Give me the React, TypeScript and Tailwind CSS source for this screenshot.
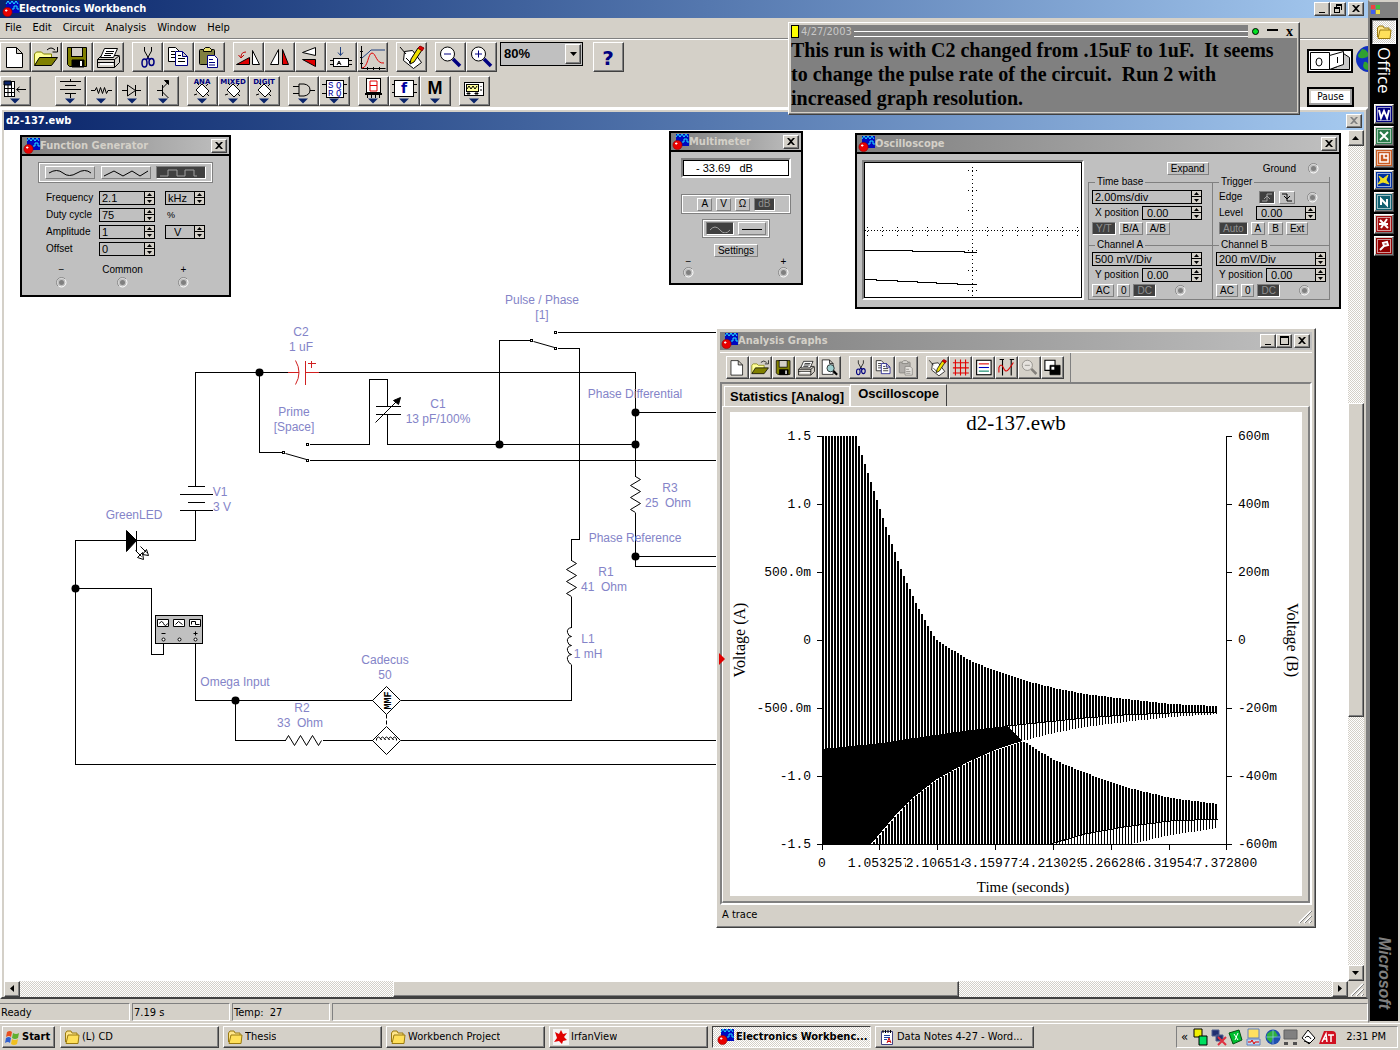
import { useId } from 'react';
import type { ReactNode } from 'react';

const raised =
  'border border-white border-r-[#404040] border-b-[#404040] shadow-[inset_-1px_-1px_0_#808080] bg-[#d4d0c8]';
const sunken = 'border border-[#808080] border-r-white border-b-white';
const dither = 'bg-[repeating-conic-gradient(#ffffff_0_25%,#d4d0c8_0_50%)] bg-[length:2px_2px]';
const ui = "font-['DejaVu_Sans_Condensed','Liberation_Sans',sans-serif] text-[11px] leading-[14px]";
const panelFont = "font-['Liberation_Sans',sans-serif] text-[10px] leading-[12px]";

/* ---------- small drawings ---------- */

function AppIcon() {
  return (
    <svg className="size-[18px] shrink-0" viewBox="0 0 18 18">
      <rect x="5" y="1" width="13" height="12" fill="#0008c0" />
      <path d="M5 4l2-3 2 3 2-3 2 3 2-3 2 3M11 9h2V6h3v3h2" fill="none" stroke="#20e0ff" />
      <circle cx="6.500" cy="12" r="4.600" fill="#e80000" stroke="#900000" strokeWidth=".6" />
      <path d="M4 10.500h2.500M5.200 9.300v2.500" stroke="#fff" strokeWidth=".9" />
    </svg>
  );
}

function FolderIcon() {
  return (
    <svg className="size-4 shrink-0" viewBox="0 0 16 16">
      <path d="M1.500 13V4l1.500-2h4l1 2h5v2" fill="#ffe68a" stroke="#9a7a10" />
      <path d="M2 14.500L4 6h11l-1 8.500z" fill="#ffe05a" stroke="#9a7a10" />
    </svg>
  );
}

function Icon({ children }: { children: ReactNode }) {
  return (
    <svg className="block size-full" viewBox="1 1 29 28" fill="none" stroke="#000">
      {children}
    </svg>
  );
}

const Tip = () => <path d="M10 22.500h10l-5 5z" fill="#0a246a" stroke="none" />;
const Chip = () => (
  <>
    <path d="M9 14l6-6 7 7-6 6z" fill="#fff" />
    <path d="M12 9l-2-2M10 18l-3 1M19 10l2-2M20 18l2 2" />
  </>
);

const icons: Record<string, ReactNode> = {
  new: <path d="M6.500 5.500h10l6 6v14h-16zM16.500 5.500v6h6" fill="#fff" />,
  open: (
    <>
      <path d="M3.500 23V12l2-2h5l2 2h8v4" fill="#ffff99" stroke="#808000" />
      <path d="M3.500 23.500l5-8h18l-6 8z" fill="#808000" />
      <path d="M16 8q4-4 8 0M26.500 5v5h-5" />
    </>
  ),
  save: (
    <>
      <path d="M5.500 5.500h19v19h-17l-2-2z" fill="#808000" />
      <rect x="9.500" y="5.500" width="11" height="9" fill="#d4d0c8" />
      <path d="M10 18h12v7H10z" fill="#000" />
      <path d="M18 19h2v5h-2z" fill="#fff" stroke="none" />
    </>
  ),
  print: (
    <>
      <path d="M4.500 17.500l4-4h17l1 1v6l-5 5h-17z" fill="#d4d0c8" />
      <path d="M11.500 6.500h13l-4 9h-13z" fill="#fff" />
      <path d="M13 9.500h8M12 11.500h8M11 13.500h7M4.500 17.500h17l5-4M4.500 20.500h17M21.500 17.500v8" />
      <path d="M7 21h13v2H7z" fill="#fff" stroke="none" />
    </>
  ),
  preview: (
    <>
      <path d="M5.500 4.500h10l5 5v15h-15zM15.500 4.500v5h5" fill="#fff" />
      <circle cx="17" cy="16" r="5" fill="#9fd0d0" />
      <path d="M21 20l5 5" strokeWidth="3" />
    </>
  ),
  cut: (
    <>
      <path d="M12.500 5v4l4.500 8M19.500 5v4l-4.500 8" />
      <g stroke="#000080" strokeWidth="1.500">
        <ellipse cx="12.500" cy="21" rx="2.500" ry="4" />
        <ellipse cx="19.500" cy="20" rx="2.500" ry="3.500" />
        <path d="M14 18l2-2 2 2" />
      </g>
    </>
  ),
  copy: (
    <>
      <path d="M5.500 5.500h7l4 4v10h-11z" fill="#fff" />
      <path d="M8 9.500h4M8 12.500h5M8 15.500h5" />
      <path d="M12.500 9.500h7l5 5v9h-12zM19.500 9.500v5h5" fill="#fff" stroke="#000080" />
      <path d="M15 13.500h3M15 16.500h7M15 19.500h7" />
    </>
  ),
  paste: (
    <>
      <rect x="5.500" y="7.500" width="15" height="15" rx="1" fill="#808040" />
      <path d="M9.500 9.500v-2l2-2h4l2 2v2z" fill="#e8e070" />
      <path d="M13.500 13.500h7l3 3v9h-10z" fill="#fff" stroke="#000080" />
      <path d="M15 17.500h4M15 20.500h6M15 23h6" stroke="#000080" />
    </>
  ),
  rotate: (
    <>
      <path d="M3.500 22.500h13v-7z" fill="#e00000" />
      <path d="M19.500 8.500v14h7z" fill="#fff" />
      <path d="M13 10q-5 0-5 5M5.500 13l2.500 3 3-3" stroke="#c00000" />
    </>
  ),
  flipH: (
    <>
      <path d="M6.500 22.500h8v-15z" fill="#fff" />
      <path d="M18.500 7.500v15h6z" fill="#e00000" />
    </>
  ),
  flipV: (
    <>
      <path d="M20.500 5.500v8l-13-3z" fill="#fff" />
      <path d="M7.500 17.500h13v7z" fill="#e00000" />
    </>
  ),
  part: (
    <>
      <path d="M14.500 5v8M12 10.500l2.500 3 2.500-3" stroke="#204080" />
      <rect x="7.500" y="16.500" width="15" height="8" fill="#fff" />
      <path d="M4 18.500h3M4 22.500h3M23 18.500h3M23 22.500h3" />
      <path d="M11 23l2-4 2 4M12 21.500h2" />
    </>
  ),
  graph: (
    <>
      <path d="M4.500 4v22.500h24M3 9.500h3M3 15.500h3M3 21.500h3M10.500 25v3M16.500 25v3M22.500 25v3" />
      <path d="M5 16l7-6 2-2h14" stroke="#204080" />
      <path d="M5 26c6 0 6-15 10-15s4 11 12 10" stroke="#e00000" />
    </>
  ),
  notes: (
    <>
      <path d="M8.500 9.500l8-1 9 12-8 6-10-8z" fill="#fff" />
      <path d="M4 5l6 7M10 16l4 4M13 21l5-4" />
      <path d="M22 6l4 2-8 12-4 2 1-5z" fill="#f0e000" />
      <path d="M22 6l2-2 4 2-2 3z" fill="#e00000" stroke="#900000" />
    </>
  ),
  zoomOut: (
    <>
      <path d="M18 17l7 7" stroke="#000080" strokeWidth="3.500" />
      <circle cx="12.500" cy="12" r="7" fill="#fff" />
      <path d="M9 12h7" stroke="#000080" />
    </>
  ),
  zoomIn: (
    <>
      <path d="M18 17l7 7" stroke="#000080" strokeWidth="3.500" />
      <circle cx="12.500" cy="12" r="7" fill="#fff" />
      <path d="M9 12h7M12.500 8.500v7" stroke="#000080" />
    </>
  ),
  help: (
    <text x="15" y="23" fill="#000080" stroke="none" textAnchor="middle" className="font-['DejaVu_Sans',sans-serif] text-[20px] font-bold">
      ?
    </text>
  ),
  grid: (
    <>
      <rect x="4.500" y="5.500" width="10" height="15" fill="#fff" />
      <path d="M4 5h7v4H4z" fill="#0a246a" />
      <path d="M5 12.500h9M5 16.500h9M8 9v11M11.500 5v15M17 13.500h9M19.500 11l-3 2.500 3 2.500" />
    </>
  ),
  battery: <path d="M15.500 3v3M5 5.500h21M10 9.500h11M5 13.500h21M10 17.500h11M15.500 18v4" />,
  resistor: <path d="M5 14.500h4l1.500-3 2 6 2-6 2 6 2-6 2 6 1.500-3h4" />,
  diode: <path d="M5 14.500h5.500M10.500 9v11l8-5.500zM18.500 9v11M18.500 14.500H24" />,
  transistor: (
    <>
      <path d="M9 14.500h5M14.500 9v11M14.500 12l6-6M14.500 16l6 6" />
      <path d="M20.500 4.500v4l-4-4z" fill="#000" />
    </>
  ),
  gate: <path d="M5 10.500h6M5 17.500h6M11 8h5q6 1 6 6t-6 6h-5zM22 14.500h5" />,
  flipflop: (
    <>
      <rect x="7.500" y="4.500" width="17" height="17" fill="#fff" />
      <path d="M3 8.500h4M3 17.500h4M25 8.500h3M25 17.500h3" />
      <g className="font-['Liberation_Mono',monospace] text-[9px]" fill="#0000a0" stroke="none">
        <text x="9" y="12">S</text>
        <text x="17" y="12">Q</text>
        <text x="9" y="20">R</text>
        <text x="17" y="20">Q</text>
      </g>
    </>
  ),
  segment: (
    <>
      <rect x="8.500" y="2.500" width="14" height="14" fill="#fff" />
      <path d="M12 5h7v10h-7zM12 9.500h7" stroke="#e00000" />
      <path d="M7 18h17" strokeWidth="2" />
      <path d="M9.500 18v4M13.500 18v4M17.500 18v4M21.500 18v4" />
    </>
  ),
  func: (
    <>
      <rect x="5.500" y="4.500" width="19" height="16" fill="#fff" />
      <path d="M3 8.500h3M3 16.500h3M25 8.500h3M25 16.500h3" />
      <text x="15" y="17" textAnchor="middle" fill="#0000a0" stroke="none" className="font-['DejaVu_Sans',sans-serif] text-[14px] font-bold">
        f
      </text>
    </>
  ),
  misc: (
    <text x="15" y="18" textAnchor="middle" fill="#000" stroke="none" className="font-['Liberation_Sans',sans-serif] text-[18px] font-bold">
      M
    </text>
  ),
  scope: (
    <>
      <rect x="5.500" y="6.500" width="19" height="13" fill="#fff" />
      <rect x="7.500" y="8.500" width="12" height="7" fill="#ffff99" />
      <path d="M8 13l2-3 2 3 2-3 2 3 2-3M22 10v1M22 13v2" />
      <path d="M8 17h3v1H8zM16 17h3v1h-3z" fill="#000" />
    </>
  ),
  redGrid: <path d="M5 8.500h22M5 15.500h22M5 22.500h22M8.500 4v22M15.500 4v22M22.500 4v22" stroke="#e00000" strokeWidth="1.500" />,
  legend: (
    <>
      <rect x="6" y="5" width="20" height="20" fill="#fff" strokeWidth="1.500" />
      <path d="M9 10h14" stroke="#e00000" strokeWidth="1.500" />
      <path d="M9 15h14" stroke="#0000c0" strokeWidth="1.500" />
      <path d="M9 20h14" stroke="#008060" strokeWidth="1.500" />
    </>
  ),
  cursors: (
    <>
      <path d="M10 4v22M22 4v22M6 4h6M20 4h6" strokeWidth="1.500" />
      <path d="M5 22v-7q3-7 6 0t6 4 8-11" stroke="#e00000" strokeWidth="1.500" />
    </>
  ),
  restore: (
    <>
      <path d="M5 5h14v14H5z" fill="#fff" strokeWidth="1.500" />
      <path d="M12 12h14v13H12z" fill="#000" />
      <path d="M14 14h4v4h-4z" fill="#fff" stroke="none" />
    </>
  ),
};

function Wave({ d, light, wide }: { d: string; light?: boolean; wide?: boolean }) {
  return (
    <svg className={wide ? 'block h-[10px] w-12' : 'block h-2 w-6'} fill="none" stroke={light ? '#a0a0a0' : '#000'}>
      <path d={d} />
    </svg>
  );
}

function Terminal() {
  return (
    <svg className="size-[11px] shrink-0" viewBox="0 0 11 11">
      <circle cx="5.500" cy="5.500" r="4.500" fill="none" stroke="#fff" />
      <path d="M2 9A4.500 4.500 0 0 1 9 2" fill="none" stroke="#808080" />
      <circle cx="5.500" cy="5.500" r="2.500" fill="#808080" />
    </svg>
  );
}

/* ---------- shared controls ---------- */

function ToolButton({ icon, label, tip }: { icon: string; label: string; tip?: boolean }) {
  return (
    <button aria-label={label} className={`h-[30px] w-[31px] shrink-0 ${raised}`}>
      <Icon>
        {icons[icon]}
        {tip && <Tip />}
      </Icon>
    </button>
  );
}

function ChipButton({ label }: { label: string }) {
  return (
    <button className={`h-[30px] w-[31px] shrink-0 ${raised}`}>
      <Icon>
        <text x="15" y="8" textAnchor="middle" fill="#000080" stroke="none" className="font-['DejaVu_Sans',sans-serif] text-[7px] font-bold">
          {label}
        </text>
        <Chip />
        <Tip />
      </Icon>
    </button>
  );
}

function CaptionButton({ kind, disabled }: { kind: 'min' | 'max' | 'restore' | 'close'; disabled?: boolean }) {
  const paths = {
    min: 'M3 9h6v1H3z',
    max: 'M2 1h9v9H2zM3 3v6h7V3z',
    restore: 'M4 1h6v6H9V3H5v1H4zM2 4h6v6H2zM3 6v3h4V6z',
    close: 'M2 2h2l2 2 2-2h2L7 5.500 10 9H8L6 7 4 9H2l3-3.500z',
  };
  return (
    <button aria-label={kind} disabled={disabled} className={`h-[14px] w-4 shrink-0 ${raised}`}>
      <svg className="mx-auto block h-3 w-3" fillRule="evenodd" fill={disabled ? '#808080' : '#000'}>
        <path d={paths[kind]} />
      </svg>
    </button>
  );
}

function Spin({ label, value, className, pad = 'pl-[2px]' }: { label?: ReactNode; value: string; className: string; pad?: string }) {
  const id = useId();
  return (
    <>
      {label && <label htmlFor={id}>{label}</label>}
      <span className={`flex h-[14px] border border-black ${className}`}>
        <input
          id={id}
          aria-label={label ? undefined : 'Scale'}
          defaultValue={value}
          className={`w-0 min-w-0 flex-1 bg-transparent text-[11px] leading-[12px] outline-none ${pad}`}
        />
        <span className="flex w-[10px] flex-col border-l border-black">
          <button aria-label="Up" className="h-[6px] border-b border-black bg-[#d4d0c8]">
            <svg className="mx-auto block h-[5px] w-[7px]">
              <path d="M1 4h5L3.500 1z" />
            </svg>
          </button>
          <button aria-label="Down" className="h-[6px] bg-[#d4d0c8]">
            <svg className="mx-auto block h-[5px] w-[7px]">
              <path d="M1 1h5L3.500 4z" />
            </svg>
          </button>
        </span>
      </span>
    </>
  );
}

function Key({ children, on, className = 'px-[3px]' }: { children: ReactNode; on?: boolean; className?: string }) {
  return (
    <button
      className={`flex h-[13px] items-center justify-center border ${
        on ? 'border-white border-t-[#808080] border-l-[#808080] bg-[#404040] text-[#909090]' : 'border-white border-r-[#808080] border-b-[#808080]'
      } ${className}`}
    >
      {children}
    </button>
  );
}

function Instrument({ title, className, children }: { title: string; className: string; children: ReactNode }) {
  return (
    <section className={`absolute border-2 border-black bg-[#c0c0c0] ${panelFont} ${className}`}>
      <header className={`flex h-[19px] items-center border-b-2 border-black bg-linear-to-r from-[#808080] to-[#c0c0c0] pr-[2px] ${ui}`}>
        <AppIcon />
        <h2 className="flex-1 font-bold text-[#d4d0c8]">{title}</h2>
        <CaptionButton kind="close" />
      </header>
      {children}
    </section>
  );
}

/* ---------- instruments ---------- */

function FunctionGenerator() {
  return (
    <Instrument title="Function Generator" className="top-[5px] left-4 h-[162px] w-[211px]">
      <div className="mx-4 mt-[6px] flex h-[21px] items-center justify-between border border-[#808080] px-[6px] shadow-[inset_0_0_0_1px_#fff]">
        <Key className="w-[50px]"><Wave wide d="M3 5q8-5 14 0t14 0 14 0" /></Key>
        <Key className="w-[50px]"><Wave wide d="M2 8l10-5 9 5 9-5 8 5 8-5" /></Key>
        <Key on className="w-[50px]"><Wave wide light d="M3 8h8V2h9v6h8V2h9v6h3" /></Key>
      </div>
      <div className="mt-2 ml-6 grid grid-cols-[53px_56px_39px] items-center gap-x-0 gap-y-[3px]">
        <Spin label="Frequency" value="2.1" className="w-14" />
        <div className="ml-[10px] w-10"><Spin value="kHz" className="w-10" /></div>
        <Spin label="Duty cycle" value="75" className="w-14" />
        <span className="ml-3 text-[9px]">%</span>
        <Spin label="Amplitude" value="1" className="w-14" />
        <div className="ml-[10px] w-10"><Spin value="V" className="w-10" pad="pl-2" /></div>
        <Spin label="Offset" value="0" className="w-14" />
      </div>
      <div className="mt-2 mr-10 ml-[34px] flex justify-between">
        {['−', 'Common', '+'].map((t) => (
          <div key={t} className="flex min-w-9 flex-col items-center gap-[1px] first:w-[11px] first:min-w-0 last:w-[11px] last:min-w-0">
            <span>{t}</span>
            <Terminal />
          </div>
        ))}
      </div>
    </Instrument>
  );
}

function Multimeter() {
  return (
    <Instrument title="Multimeter" className="top-[1px] left-[665px] h-[154px] w-[134px]">
      <div className="flex flex-col items-center px-[10px] pt-[6px]">
        <output className="h-5 w-full border-2 border-[#808080] border-r-white border-b-white">
          <span className="block h-4 border border-black bg-white pl-3 text-[11px] leading-[14px] whitespace-pre">- 33.69   dB</span>
        </output>
        <div className="mt-4 flex h-5 w-full items-center justify-center gap-1 border border-[#808080] shadow-[inset_0_0_0_1px_#fff]">
          <Key>A</Key>
          <Key>V</Key>
          <Key>Ω</Key>
          <Key on>dB</Key>
        </div>
        <div className="mt-[5px] flex h-[19px] w-[68px] items-center justify-center gap-1 border border-[#808080] shadow-[inset_0_0_0_1px_#fff]">
          <Key on className="w-7"><Wave light d="M2 5q5-6 10 0t10 0" /></Key>
          <Key className="w-7"><Wave d="M2 4.500h20" /></Key>
        </div>
        <Key className="mt-[6px] px-[3px]">Settings</Key>
      </div>
      <div className="mx-3 flex justify-between">
        {['−', '+'].map((t) => (
          <div key={t} className="flex flex-col items-center leading-[10px]">
            <span>{t}</span>
            <Terminal />
          </div>
        ))}
      </div>
    </Instrument>
  );
}

function ScopeScreen() {
  return (
    <svg className="block h-full w-full" shapeRendering="crispEdges" fill="none" stroke="#000">
      <path d="M0 67.500H217" strokeDasharray="1 2" />
      <path d="M107.500 4V134" strokeDasharray="1 3" />
      <path d="M2.500 64V74M17.500 64V74M32.500 64V74M47.500 64V74M62.500 64V74M77.500 64V74M92.500 64V74M122.500 64V74M137.500 64V74M152.500 64V74M167.500 64V74M182.500 64V74M197.500 64V74M212.500 64V74" strokeDasharray="1 3" />
      <path d="M103 7.500h10M103 27.500h10M103 47.500h10M103 87.500h10M103 107.500h10M103 127.500h10" strokeDasharray="1 3" />
      <path d="M0 87.500H47V88.500H99V89.500H112M0 116.500H11V117.500H32V118.500H52V119.500H71V120.500H92V121.500H112" />
    </svg>
  );
}

function Group({ title, className = '', children }: { title: string; className?: string; children: ReactNode }) {
  return (
    <fieldset className={`min-w-0 border-t border-l border-[#808080] pl-[3px] ${className}`}>
      <legend className="ml-[3px] px-[2px] leading-[10px]">{title}</legend>
      {children}
    </fieldset>
  );
}

function Channel({ title, scale }: { title: string; scale: string }) {
  return (
    <Group title={title} className="-mt-[5px]">
      <div className="flex flex-col gap-[2px] pt-[2px]">
        <Spin value={scale} className="w-[110px]" />
        <div className="flex w-[110px] items-center justify-between pl-[3px]">
          <Spin label="Y position" value="0.00" className="w-[60px]" pad="pl-1" />
        </div>
        <div className="flex items-center gap-[3px]">
          <Key>AC</Key>
          <Key>0</Key>
          <Key on>DC</Key>
          <span className="ml-4 flex"><Terminal /></span>
        </div>
      </div>
    </Group>
  );
}

function Oscilloscope() {
  return (
    <Instrument title="Oscilloscope" className="top-[3px] left-[851px] h-[176px] w-[486px]">
      <div className="flex h-[153px] gap-1 px-[5px] pt-[6px] pb-[7px]">
        <div className="h-[140px] w-[222px] shrink-0 border-2 border-[#808080] border-r-white border-b-white">
          <div className="h-full border border-black bg-white">
            <ScopeScreen />
          </div>
        </div>
        <div className="flex flex-1 flex-col">
          <div className="flex h-5 items-center justify-end gap-3 pr-[15px]">
            <span className="mr-[42px]"><Key>Expand</Key></span>
            <span>Ground</span>
            <Terminal />
          </div>
          <div className="mr-1 grid grid-cols-[124px_1fr] grid-rows-[68px_54px] border-r border-b border-[#808080]">
            <Group title="Time base">
              <div className="flex flex-col gap-[2px] pt-[3px]">
                <Spin value="2.00ms/div" className="w-[110px]" />
                <div className="flex w-[110px] items-center justify-between pl-[3px]">
                  <Spin label="X position" value="0.00" className="w-[60px]" pad="pl-1" />
                </div>
                <div className="flex gap-[3px]">
                  <Key on>Y/T</Key>
                  <Key>B/A</Key>
                  <Key>A/B</Key>
                </div>
              </div>
            </Group>
            <Group title="Trigger">
              <div className="flex flex-col gap-[2px] pt-[3px] pl-[3px]">
                <div className="flex h-[14px] items-center gap-1">
                  <span className="w-9">Edge</span>
                  <Key on className="w-4"><svg className="h-[9px] w-3" stroke="#a0a0a0" fill="none"><path d="M1 8h5V1h5M3 6l3-3 3 3" /></svg></Key>
                  <Key className="w-4"><svg className="h-[9px] w-3" stroke="#000" fill="none"><path d="M1 1h5v7h5M3 3l3 3 3-3" /></svg></Key>
                  <span className="ml-2 flex"><Terminal /></span>
                </div>
                <div className="flex w-[97px] items-center justify-between">
                  <Spin label="Level" value="0.00" className="w-[60px]" pad="pl-1" />
                </div>
                <div className="flex gap-[3px]">
                  <Key on>Auto</Key>
                  <Key>A</Key>
                  <Key>B</Key>
                  <Key>Ext</Key>
                </div>
              </div>
            </Group>
            <Channel title="Channel A" scale="500 mV/Div" />
            <Channel title="Channel B" scale="200 mV/Div" />
          </div>
        </div>
      </div>
    </Instrument>
  );
}

/* ---------- schematic ---------- */

const wires =
  'M195 486V372H287M318 372H635V476M259 372V452H282M309 444H369V379H387V406M387 414V444H635M309 460H720' +
  'M195 510V540H75V764H720M75 588H151V654H163V643M195 643V700H372M400 700H571V664M235 700V740H285' +
  'M322 740H372M400 740H720M557 332H720M530 340H499V444M557 348H579V539H571V560M571 596V627' +
  'M635 412H720M635 512V566H720M635 556H720M187 486H204M179 494H212M187 502H204M179 510H212M375 406H400M375 414H400M136 530V551';

const dots = [[259, 372], [499, 444], [635, 412], [635, 444], [635, 556], [75, 588], [235, 700]];
const contacts = [[283, 452], [307, 444], [307, 460], [531, 340], [555, 332], [555, 348]];

const partLabels: [number, number, string][] = [
  [301, 337, 'C2'], [301, 352, '1 uF'], [294, 417, 'Prime'], [294, 432, '[Space]'],
  [438, 409, 'C1'], [438, 424, '13 pF/100%'], [220, 497, 'V1'], [222, 512, '3 V'],
  [134, 520, 'GreenLED'], [235, 687, 'Omega Input'], [385, 665, 'Cadecus'], [385, 680, '50'],
  [302, 713, 'R2'], [300, 728, '33  Ohm'], [542, 305, 'Pulse / Phase'], [542, 320, '[1]'],
  [635, 399, 'Phase Differential'], [670, 493, 'R3'], [668, 508, '25  Ohm'], [635, 543, 'Phase Reference'],
  [606, 577, 'R1'], [604, 592, '41  Ohm'], [588, 644, 'L1'], [588, 659, '1 mH'],
];

function Schematic() {
  return (
    <svg className="absolute inset-0 h-full w-full">
      <g transform="translate(-3.5 -129.5)" fill="none" stroke="#000">
        <path d={wires} shapeRendering="crispEdges" />
        {dots.map(([x, y]) => (
          <circle key={`${x}-${y}`} cx={x} cy={y} r="4" fill="#000" stroke="none" />
        ))}
        {contacts.map(([x, y]) => (
          <rect key={`${x}-${y}`} x={x - 1} y={y - 1} width="2" height="2" />
        ))}
        <path d="M285 453l21 6M533 341l21 6" />
        <path d="M285 740l3-5 6 10 6-10 6 10 6-10 6 10 3-5" />
        <path d="M635 476l5 3-10 6 10 6-10 6 10 6-10 6 5 3M571 560l5 3-10 6 10 6-10 6 10 6-10 6 5 3" />
        <path d="M571 627q-5 1-4 5t4 4q-5 1-4 5t4 4q-5 1-4 5t4 4q-5 1-4 5t4 5" />
        <path d="M386 686l14 14-14 14-14-14zM386 726l14 14-14 14-14-14z" />
        <path d="M386 714V726" strokeDasharray="4 2" />
        <path d="M376 740v-2q2-3 4 0t0 0q2-3 4 0t0 0q2-3 4 0t0 0q2-3 4 0t0 0q2-3 4 0v2" />
        <path d="M375 422l22-22" />
        <path d="M400 397l-2 7-5-4z" fill="#000" />
        <path d="M126 530v21l10-11z" fill="#000" />
        <path d="M135 550l6 6M140 546l6 6M143 559l-6-2 5-5zM148 555l-6-1 4-5z" />
        <g stroke="#d02020" shapeRendering="crispEdges">
          <path d="M287 372H298M305 360V384M305 372H318M307 363H315M311 360V367" />
          <path d="M295 360q7 12 0 24" shapeRendering="auto" />
        </g>
        <rect x="155" y="615" width="47" height="28" fill="#c0c0c0" />
        <path d="M157 619h11v7h-11zM173 619h11v7h-11zM189 619h11v7h-11z" fill="#fff" />
        <path d="M159 623q2-4 4 0t4 0M175 624l3-3 4 3M191 624v-3h4v3h4M161 633h4M193 633h4M195 631v4" />
        <circle cx="163" cy="639" r="1.500" fill="#fff" />
        <circle cx="179" cy="639" r="1.500" fill="#fff" />
        <circle cx="195" cy="639" r="1.500" fill="#fff" />
        <text transform="translate(390 700) rotate(-90)" textAnchor="middle" fill="#000" stroke="none" className="font-['Liberation_Mono',monospace] text-[10px] font-bold">
          MMF
        </text>
        <g transform="translate(-0.5 -1.5)" fill="#8484c8" stroke="none" textAnchor="middle" className="font-['Liberation_Sans',sans-serif] text-[12px]">
          {partLabels.map(([x, y, t]) => (
            <text key={t} x={x} y={y} className="whitespace-pre">
              {t}
            </text>
          ))}
        </g>
      </g>
    </svg>
  );
}

/* ---------- analysis graphs ---------- */

type Curve = [number, number][];

const aTop: Curve = [[822, 436], [855, 436], [861, 455], [871, 485], [883, 521], [900, 569], [915, 603], [931, 633], [937, 641], [968, 660], [995, 671], [1026, 681], [1053, 688], [1085, 694], [1124, 699], [1170, 704], [1218, 706]];
const aLow: Curve = [[822, 749], [882, 743], [921, 737], [964, 731], [1007, 726], [1046, 722], [1085, 718], [1124, 715], [1170, 713], [1218, 712]];
const aTail: Curve = [[1007, 746], [1022, 741], [1053, 733], [1085, 727], [1124, 722], [1170, 717], [1218, 714]];
const solidLow: Curve = [[822, 844], [871, 844], [894, 817], [910, 800], [937, 779], [968, 762], [995, 750], [1022, 741]];
const bTop: Curve = [[1009, 728], [1022, 741], [1053, 760], [1085, 773], [1124, 787], [1170, 798], [1218, 804]];
const bLow: Curve = [[822, 844], [1051, 844], [1085, 834], [1124, 827], [1170, 821], [1218, 819]];
const bTail: Curve = [[1051, 844], [1131, 844], [1170, 835], [1218, 828]];

function at(curve: Curve, x: number) {
  for (let i = 1; i < curve.length; i++) {
    const [x0, y0] = curve[i - 1];
    const [x1, y1] = curve[i];
    if (x <= x1) return Math.round(y0 + ((y1 - y0) * (x - x0)) / (x1 - x0));
  }
  return curve[curve.length - 1][1];
}

function bars(top: Curve, low: Curve, from: number, width: number) {
  let d = '';
  for (let x = from; x < 1217; x += 3) {
    const y0 = at(top, x);
    const y1 = at(low, x);
    if (y1 > y0) d += `M${x} ${y0}h${width}V${y1}h-${width}z`;
  }
  return d;
}

const line = (c: Curve) => 'M' + c.map((p) => p.join(' ')).join('L');
const solid = line([...aLow.filter(([x]) => x < 1010), [1009, 728], ...[...solidLow].reverse()]) + 'z';

const leftTicks = ['1.5', '1.0', '500.0m', '0', '-500.0m', '-1.0', '-1.5'];
const rightTicks = ['600m', '400m', '200m', '0', '-200m', '-400m', '-600m'];
const timeTicks: [number, string][] = [
  [822, '0'], [879, '1.053257'], [937, '2.106514'], [995, '3.159771'],
  [1053, '4.213029'], [1111, '5.266286'], [1169, '6.319543'], [1226, '7.372800'],
];

function Plot() {
  return (
    <svg className="block h-full w-full bg-white" viewBox="730 412 572 484" preserveAspectRatio="xMidYMid meet">
      <g shapeRendering="crispEdges">
        <path d={bars(aTop, aLow, 822, 2)} />
        <path d={bars(aLow, aTail, 1009, 1)} />
        <path d={solid} />
        <path d={bars(solidLow, bLow, 873, 2)} clipPath="url(#beforeCross)" />
        <path d={bars(bTop, bLow, 1023, 2)} />
        <path d={bars(bLow, bTail, 1053, 1)} />
        <path d={line(aLow.slice(4)) + line(bLow.slice(1))} fill="none" stroke="#000" />
        <path
          d="M822.500 436V844.500H1226.500V436M817 436.500h5M817 504.500h5M817 572.500h5M817 640.500h5M817 708.500h5M817 776.500h5M817 844.500h5M1226 436.500h6M1226 504.500h6M1226 572.500h6M1226 640.500h6M1226 708.500h6M1226 776.500h6M1226 844.500h6"
          fill="none"
          stroke="#000"
        />
        <path d="M822.500 844v6M879.500 844v6M937.500 844v6M995.500 844v6M1053.500 844v6M1111.500 844v6M1169.500 844v6M1226.500 844v6" stroke="#000" />
      </g>
      <clipPath id="beforeCross">
        <rect x="822" y="412" width="200" height="440" />
      </clipPath>
      <g className="font-['Liberation_Mono',monospace] text-[13px]">
        {leftTicks.map((t, i) => (
          <text key={t} x="811" y={440 + i * 68} textAnchor="end">{t}</text>
        ))}
        {rightTicks.map((t, i) => (
          <text key={t} x="1238" y={440 + i * 68}>{t}</text>
        ))}
        {timeTicks.map(([x, t]) => (
          <g key={t}>
            {t !== '0' && <rect x={x - 31} y="855" width="62" height="14" fill="#fff" />}
            <text x={x} y="867" textAnchor="middle">{t}</text>
          </g>
        ))}
      </g>
      <g textAnchor="middle" className="font-['Liberation_Serif',serif]">
        <text x="1016" y="430" className="text-[21px]">d2-137.ewb</text>
        <text x="1023" y="892" className="text-[15px]">Time (seconds)</text>
        <text transform="translate(745 640) rotate(-90)" className="text-[16px]">Voltage (A)</text>
        <text transform="translate(1287 640) rotate(90)" className="text-[16px]">Voltage (B)</text>
      </g>
    </svg>
  );
}

const graphTools = [
  ['new', 'open', 'save', 'print', 'preview'],
  ['cut', 'copy', 'paste'],
  ['notes', 'redGrid', 'legend', 'cursors', 'zoomOut', 'restore'],
];

function Grip() {
  return (
    <svg className="size-[14px] shrink-0">
      <path d="M13 1L1 13M13 6L6 13M13 11l-2 2" stroke="#fff" strokeWidth="2" />
      <path d="M14 1L2 13M14 6L7 13M14 11l-2 2" stroke="#808080" />
    </svg>
  );
}

function AnalysisGraphs() {
  return (
    <section className={`absolute top-[198px] left-[712px] flex h-[600px] w-[600px] flex-col p-[3px] ${ui} ${raised}`}>
      <header className="flex h-[18px] shrink-0 items-center bg-linear-to-r from-[#808080] to-[#c0c0c0] pr-[2px]">
        <AppIcon />
        <h2 className="flex-1 font-bold text-[#d4d0c8]">Analysis Graphs</h2>
        <CaptionButton kind="min" />
        <CaptionButton kind="max" />
        <span className="w-[2px]" />
        <CaptionButton kind="close" />
      </header>
      <div className="mt-[2px] flex h-[30px] shrink-0 border-t border-white">
        <div className="flex gap-2 border-r border-[#808080] pt-[3px] pr-[6px] pl-[6px]">
          {graphTools.map((set) => (
            <div key={set[0]} className="flex">
              {set.map((name) => {
                const off = name === 'paste' || name === 'zoomOut';
                return (
                  <button key={name} aria-label={name} disabled={off} className={`h-[23px] w-[23px] ${raised}`}>
                    <span className={off ? 'block size-full opacity-40 grayscale' : 'block size-full'}>
                      <Icon>{icons[name]}</Icon>
                    </span>
                  </button>
                );
              })}
            </div>
          ))}
        </div>
      </div>
      <div className="flex min-h-0 flex-1 flex-col border-2 border-[#808080] border-r-white border-b-white">
        <div role="tablist" className="flex h-[22px] shrink-0 items-end pl-[2px] font-['Liberation_Sans',sans-serif] text-[13px] font-bold">
          <button role="tab" aria-selected="false" className="h-5 border border-b-0 border-white px-[5px]">Statistics [Analog]</button>
          <button role="tab" aria-selected="true" className="h-[22px] border border-b-0 border-white border-r-[#404040] px-[7px] pb-1">Oscilloscope</button>
        </div>
        <div className="relative min-h-0 flex-1 border border-white border-r-2 border-b-2 border-r-[#808080] border-b-[#808080] py-[5px] pr-[6px] pl-[7px]">
          <Plot />
          <svg className="absolute top-[246px] -left-1 h-3 w-[6px]">
            <path d="M0 0l6 6-6 6z" fill="#e00000" />
          </svg>
        </div>
      </div>
      <footer className="flex h-[19px] shrink-0 items-end justify-between pl-[2px]">
        <span className="self-center">A trace</span>
        <Grip />
      </footer>
    </section>
  );
}

/* ---------- frame ---------- */

function StickyNote() {
  return (
    <section className={`absolute top-[22px] left-[788px] z-10 flex h-[93px] w-[512px] flex-col p-[2px] ${raised}`}>
      <header className={`flex h-[13px] shrink-0 items-center ${ui}`}>
        <span className="h-[13px] w-2 border border-black bg-[#ffff00]" />
        <div className="flex h-full flex-1 items-center bg-[#808080] text-[#c8c8c8]">
          <span className="px-[2px]">4/27/2003</span>
          <span className="mt-1 h-[6px] flex-1 border-y border-white" />
        </div>
        <div className="flex w-[49px] items-center justify-around">
          <span className="size-[7px] rounded-full border border-black bg-[#00e020]" />
          <span className="mb-1 h-[2px] w-[11px] bg-black" />
          <button aria-label="Close note" className="font-['Liberation_Serif',serif] text-[14px] leading-[12px] font-bold">x</button>
        </div>
      </header>
      <textarea
        aria-label="Note"
        defaultValue="This run is with C2 changed from .15uF to 1uF.  It seems to change the pulse rate of the circuit.  Run 2 with increased graph resolution."
        className="block w-full flex-1 resize-none overflow-hidden bg-[#808080] pr-4 font-['Liberation_Serif',serif] text-[20px] leading-6 font-bold outline-none"
      />
    </section>
  );
}

function Toolbars() {
  return (
    <div className="flex h-[69px] shrink-0 border-t border-b border-t-white border-b-white pt-[2px]">
      <div className="flex flex-1 flex-col gap-1">
        <div className="flex gap-2">
          <div className="flex">
            <ToolButton icon="new" label="New" />
            <ToolButton icon="open" label="Open" />
            <ToolButton icon="save" label="Save" />
            <ToolButton icon="print" label="Print" />
          </div>
          <div className="flex">
            <ToolButton icon="cut" label="Cut" />
            <ToolButton icon="copy" label="Copy" />
            <ToolButton icon="paste" label="Paste" />
          </div>
          <div className="flex">
            <ToolButton icon="rotate" label="Rotate" />
            <ToolButton icon="flipH" label="Flip horizontal" />
            <ToolButton icon="flipV" label="Flip vertical" />
            <ToolButton icon="part" label="Create subcircuit" />
            <ToolButton icon="graph" label="Display graphs" />
          </div>
          <ToolButton icon="notes" label="Component properties" />
          <div className="flex">
            <ToolButton icon="zoomOut" label="Zoom out" />
            <ToolButton icon="zoomIn" label="Zoom in" />
            <div className="relative mr-[2px] ml-[3px] h-6 w-[83px]">
              <select
                aria-label="Zoom"
                className="h-full w-full appearance-none border border-black bg-[#c0c0c0] pl-[3px] font-['Liberation_Sans',sans-serif] text-[13px] leading-4 font-bold"
              >
                <option>80%</option>
              </select>
              <span className={`pointer-events-none absolute top-[2px] right-[2px] flex h-5 w-4 items-center justify-center ${raised}`}>
                <svg className="h-1 w-[7px]">
                  <path d="M0 0h7L3.500 4z" />
                </svg>
              </span>
            </div>
          </div>
          <ToolButton icon="help" label="Help" />
        </div>
        <div className="flex gap-2">
          <span className="mr-4 flex"><ToolButton icon="grid" label="Favorites" tip /></span>
          <div className="flex">
            <ToolButton icon="battery" label="Sources" tip />
            <ToolButton icon="resistor" label="Basic" tip />
            <ToolButton icon="diode" label="Diodes" tip />
            <ToolButton icon="transistor" label="Transistors" tip />
          </div>
          <div className="flex">
            <ChipButton label="ANA" />
            <ChipButton label="MIXED" />
            <ChipButton label="DIGIT" />
          </div>
          <div className="flex">
            <ToolButton icon="gate" label="Logic gates" tip />
            <ToolButton icon="flipflop" label="Digital" tip />
          </div>
          <div className="flex">
            <ToolButton icon="segment" label="Indicators" tip />
            <ToolButton icon="func" label="Controls" tip />
            <ToolButton icon="misc" label="Miscellaneous" tip />
          </div>
          <ToolButton icon="scope" label="Instruments" tip />
        </div>
      </div>
      <div className="flex w-[61px] flex-col gap-[10px] pt-[7px]">
        <div className="flex justify-between">
          <button aria-label="Power" className="h-6 w-[46px] border-2 border-black bg-white">
            <svg className="block h-5 w-[42px]" fill="none" stroke="#000">
              <path d="M1.500 1.500h19v17h-19z" />
              <ellipse cx="10" cy="11" rx="3" ry="4" />
              <path d="M20.500 18.500l8-3 6-13 6 4v12z" fill="#c8c8c8" />
              <path d="M20.500 18.500v-14l14-4v13l-6 2zM28.500 6v6" fill="#fff" />
            </svg>
          </button>
          <svg className="h-7 w-3 -translate-y-1" viewBox="0 0 12 28">
            <circle cx="13" cy="14" r="13" fill="#1030c0" />
            <path d="M6 4q4 0 6 4t-4 5-6-3zM8 17q3-1 4 2v6q-4 0-5-4z" fill="#30a030" />
          </svg>
        </div>
        <button className={`h-6 w-[47px] border-2 border-black bg-white text-[10px] shadow-[inset_-2px_-2px_0_#a0a0a0,inset_2px_2px_0_#d4d0c8]`}>Pause</button>
      </div>
    </div>
  );
}

function Arrow({ d, label }: { d: string; label: string }) {
  return (
    <button aria-label={label} className={`size-4 shrink-0 ${raised}`}>
      <svg className="block size-[14px]">
        <path d={d} />
      </svg>
    </button>
  );
}

function Workspace() {
  return (
    <div className="flex min-h-0 flex-1 flex-col border-2 border-t-white border-l-white border-r-[#808080] border-b-[#404040] p-[2px] pb-0">
      <header className="flex h-[18px] shrink-0 items-center bg-linear-to-r from-[#0a246a] to-[#a6caf0] pr-[2px] pl-[2px]">
        <h2 className="flex-1 font-bold text-white">d2-137.ewb</h2>
        <CaptionButton kind="close" disabled />
      </header>
      <div className="flex min-h-0 flex-1">
        <div className="relative flex-1 overflow-hidden bg-white">
          <Schematic />
          <FunctionGenerator />
          <Multimeter />
          <Oscilloscope />
          <AnalysisGraphs />
        </div>
        <div className={`flex w-4 flex-col ${dither}`}>
          <Arrow label="Scroll up" d="M3 9h7L6.500 5z" />
          <span className="grow-[257] basis-0" />
          <span className={`grow-[313] basis-0 ${raised}`} />
          <span className="grow-[248] basis-0" />
          <Arrow label="Scroll down" d="M3 5h7L6.500 9z" />
        </div>
      </div>
      <div className="flex h-4 shrink-0">
        <div className={`flex flex-1 ${dither}`}>
          <Arrow label="Scroll left" d="M9 3v7L5 6.500z" />
          <span className="grow-[374] basis-0" />
          <span className={`grow-[565] basis-0 ${raised}`} />
          <span className="grow-[374] basis-0" />
          <Arrow label="Scroll right" d="M5 3v7l4-3.500z" />
        </div>
        <div className="flex w-4 justify-end pt-[2px]">
          <Grip />
        </div>
      </div>
    </div>
  );
}

const officeApps: [string, string, ReactNode][] = [
  ['Word', '#000080', <path d="M4 5l2 8 3-7 3 7 2-8" strokeWidth="2" />],
  ['Excel', '#2a7a4a', <path d="M5 5l8 8M13 5l-8 8" strokeWidth="2" />],
  ['PowerPoint', '#c85a20', <path d="M5 5h8v8H5zM9 5v4h4" strokeWidth="1.500" />],
  ['Messenger', '#0030a0', <path d="M4 5l4 3 5-4-2 5 3 4-6-2-5 2 3-4z" stroke="#f0e020" fill="#f0e020" />],
  ['Netscape', '#106070', <path d="M6 12V6l6 6V6" strokeWidth="2" />],
  ['IrfanView', '#a01010', <path d="M5 5l8 8M12 4l-6 9M4 9h9" strokeWidth="2" />],
  ['Access', '#900000', <path d="M5 13l4-4M9 9l-1-3 4-1 1 3z" strokeWidth="2" />],
];

function OfficeBar() {
  return (
    <aside className="flex w-8 flex-col items-center border-2 border-[#d4d0c8] border-l-[#808080] bg-black">
      <div className="flex h-4 w-full shrink-0 bg-[#808080]">
        <svg className="size-[14px]">
          <path d="M1 3h4v4H1z" fill="#f04040" />
          <path d="M6 3h4v4H6z" fill="#40c040" />
          <path d="M1 8h4v4H1z" fill="#4060f0" />
          <path d="M6 8h4v4H6z" fill="#f0e040" />
        </svg>
      </div>
      <button aria-label="Folder" className={`mt-[2px] flex h-6 w-6 items-center justify-center ${sunken} ${dither}`}>
        <FolderIcon />
      </button>
      <span className="mt-[3px] h-[57px] font-['Open_Sans',sans-serif] text-[17px] leading-6 text-white [writing-mode:vertical-rl]">Office</span>
      <div className="flex flex-col gap-[2px]">
        {officeApps.map(([name, color, glyph]) => (
          <button key={name} aria-label={name} className={`size-5 ${raised}`}>
            <svg className="block size-[18px]" viewBox="0 0 18 18" fill="none" stroke="#fff">
              <rect x="1" y="1" width="16" height="16" fill={color} stroke="none" />
              <rect x="2.500" y="2.500" width="13" height="13" opacity=".6" />
              {glyph}
            </svg>
          </button>
        ))}
      </div>
      <span className="mt-auto mb-3 font-['Liberation_Sans',sans-serif] text-[16px] leading-5 font-bold text-[#808080] italic [writing-mode:vertical-rl]">Microsoft</span>
    </aside>
  );
}

function TrayIcons() {
  return (
    <svg className="h-[18px] w-[146px]" viewBox="0 0 146 18" fill="none">
      <path d="M2 1h8v8H2z" fill="#f0f000" stroke="#000" />
      <path d="M7 8h8v9H7z" fill="#00e060" stroke="#000" />
      <path d="M20 2h7v6h-7zM24 7h7v6h-7z" fill="#203070" stroke="#506090" />
      <path d="M26 9l8 8M34 9l-8 8" stroke="#e03040" strokeWidth="2" />
      <path d="M37 5l10-3 3 10-9 4z" fill="#00c030" stroke="#005010" />
      <path d="M42 6l4 6M46 5l-3 7" stroke="#fff" />
      <path d="M56 1h11v9H56z" fill="#ffe060" stroke="#6080c0" />
      <path d="M55 11h13v6H55z" fill="#c0d8f0" stroke="#6080c0" />
      <path d="M56 14h3l1-2 2 4 1-2h4" stroke="#e00000" />
      <circle cx="81" cy="9" r="7.500" fill="#2050b0" />
      <path d="M75 6q4-4 8-3l3 5-5 2-2 5-4-4z" fill="#30b040" />
      <path d="M81 2v14M74 9h14" stroke="#a0d0ff" strokeWidth=".6" />
      <path d="M92 2h13v9H92z" fill="#808080" stroke="#606060" />
      <path d="M92 14h4v3h-4zM101 14h4v3h-4z" fill="#505050" />
      <path d="M110 10l6-8 7 8-6 6z" fill="#fff" stroke="#000" />
      <path d="M113 10q3-4 6 1M112 13l6 2" stroke="#000" />
      <path d="M127 16l5-13h8q4 0 4 4v9z" fill="#d01020" />
      <path d="M130 14l4-8 1 8M131 11h4M136 7h6M139 7v7" stroke="#fff" strokeWidth="1.500" />
    </svg>
  );
}

const tasks = [
  { name: '(L) CD', icon: <FolderIcon /> },
  { name: 'Thesis', icon: <FolderIcon /> },
  { name: 'Workbench Project', icon: <FolderIcon /> },
  {
    name: 'IrfanView',
    icon: (
      <svg className="size-4 shrink-0" viewBox="0 0 16 16">
        <rect width="16" height="16" fill="#f4f4f4" />
        <path d="M2 3l4 2 2-4 2 4 4-1-3 4 3 3-4 1-1 3-3-3-5 1 3-4z" fill="#e00000" />
      </svg>
    ),
  },
  { name: 'Electronics Workbenc...', icon: <AppIcon />, active: true },
  {
    name: 'Data Notes 4-27 - Word...',
    icon: (
      <svg className="size-4 shrink-0" viewBox="0 0 16 16" fill="none">
        <path d="M2.500 2.500h11v13h-11z" fill="#fff" stroke="#404080" />
        <path d="M4 1v3M6.500 1v3M9 1v3M11.500 1v3" stroke="#000" />
        <path d="M5 6.500h6M5 8.500h6M5 10.500h3" stroke="#2040a0" />
        <path d="M8 14l2-5 2 5M9 12.500h2" stroke="#d00000" />
      </svg>
    ),
  },
];

function Taskbar() {
  return (
    <footer className="flex h-[27px] shrink-0 items-center border-t border-white px-[2px]">
      <button className={`mr-[5px] flex h-[22px] w-[53px] items-center gap-[1px] pl-[2px] font-bold ${raised}`}>
        <svg className="size-4 shrink-0" viewBox="0 0 16 16">
          <path d="M2 3q3-2 5 0L6 8Q4 6 1 8z" fill="#e85020" />
          <path d="M8 4q3 2 6 0l-1 5q-3 2-6 0z" fill="#60b030" />
          <path d="M1 9q3-2 5 0l-1 5q-2-2-5 0z" fill="#3060d0" />
          <path d="M7 10q3 2 6 0l-1 5q-3 2-6 0z" fill="#f0c020" />
        </svg>
        Start
      </button>
      <nav className="flex min-w-0 flex-1 gap-1">
        {tasks.map(({ name, icon, active }) => (
          <button
            key={name}
            className={`flex h-[22px] min-w-0 max-w-[159px] flex-1 items-center gap-[2px] pl-[3px] whitespace-nowrap ${
              active ? `border border-[#404040] border-r-white border-b-white font-bold ${dither}` : raised
            }`}
          >
            {icon}
            <span className="truncate">{name}</span>
          </button>
        ))}
      </nav>
      <div className={`flex h-[22px] items-center gap-1 pr-[11px] pl-1 ${sunken}`}>
        <span className="text-[13px]">«</span>
        <TrayIcons />
        <time className="ml-1">2:31 PM</time>
      </div>
    </footer>
  );
}

export default function App() {
  return (
    <div className={`relative flex h-screen flex-col overflow-hidden bg-[#d4d0c8] text-black ${ui}`}>
      <div className="flex min-h-0 flex-1">
        <main className="flex min-w-0 flex-1 flex-col">
          <header className="flex h-[18px] shrink-0 items-center bg-linear-to-r from-[#0a246a] to-[#a6caf0] pr-1 pl-[1px]">
            <AppIcon />
            <h1 className="flex-1 font-bold text-white">Electronics Workbench</h1>
            <CaptionButton kind="min" />
            <CaptionButton kind="restore" />
            <span className="w-[2px]" />
            <CaptionButton kind="close" />
          </header>
          <nav className="flex h-[21px] shrink-0 items-center gap-[11px] border-b border-[#808080] pl-[5px]">
            {['File', 'Edit', 'Circuit', 'Analysis', 'Window', 'Help'].map((item) => (
              <button key={item}>{item}</button>
            ))}
          </nav>
          <Toolbars />
          <Workspace />
          <footer className="flex h-6 shrink-0 gap-[2px] pt-1 pb-[2px]">
            <span className={`w-[130px] pl-[1px] leading-[18px] ${sunken} border-l-0`}>Ready</span>
            <span className={`w-[98px] pl-[1px] leading-[18px] ${sunken}`}>7.19 s</span>
            <span className={`w-[98px] pl-[1px] leading-[18px] whitespace-pre ${sunken}`}>Temp:  27</span>
            <span className={`flex-1 ${sunken}`} />
          </footer>
        </main>
        <OfficeBar />
      </div>
      <Taskbar />
      <StickyNote />
    </div>
  );
}
